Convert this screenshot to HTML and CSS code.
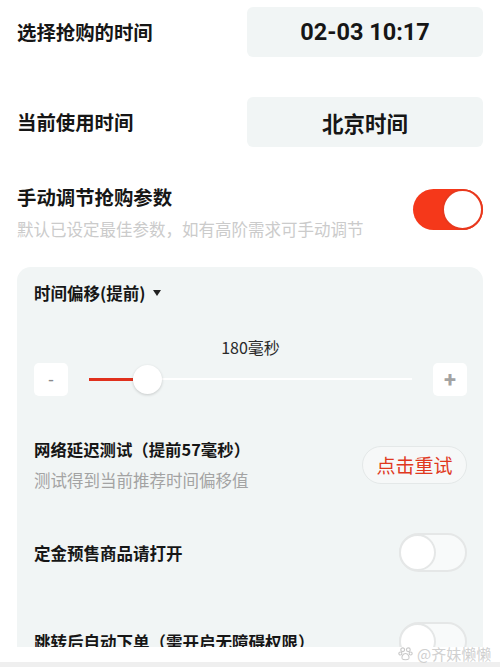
FILE: index.html
```html
<!DOCTYPE html>
<html lang="zh-CN">
<head>
    <meta charset="UTF-8">
    <meta name="viewport" content="width=device-width, initial-scale=1.0">
    <title>抢购设置</title>
    <link rel="stylesheet" href="styles.css">
</head>
<body>

    <div class="screen">
        <div class="content">

            <div class="row first">
                <div class="label">选择抢购的时间</div>
                <div class="pick time">02-03 10:17</div>
            </div>

            <div class="row second">
                <div class="label">当前使用时间</div>
                <div class="pick zone">北京时间</div>
            </div>

            <div class="manual">
                <div class="manual-text">
                    <div class="label">手动调节抢购参数</div>
                    <div class="hint">默认已设定最佳参数，如有高阶需求可手动调节</div>
                </div>
                <div class="switch on"><span class="knob"></span></div>
            </div>

            <div class="card">
                <div class="card-title">时间偏移(提前)<span class="arrow"></span></div>

                <div class="value">180毫秒</div>

                <div class="slider">
                    <div class="step">-</div>
                    <div class="track">
                        <div class="line"></div>
                        <div class="fill"></div>
                        <div class="thumb"></div>
                    </div>
                    <div class="step plus">+</div>
                </div>

                <div class="net">
                    <div>
                        <div class="net-title">网络延迟测试（提前57毫秒）</div>
                        <div class="net-hint">测试得到当前推荐时间偏移值</div>
                    </div>
                    <div class="retry">点击重试</div>
                </div>

                <div class="opt deposit">
                    <div class="opt-name">定金预售商品请打开</div>
                    <div class="switch off"><span class="knob"></span></div>
                </div>

                <div class="opt auto">
                    <div class="opt-name">跳转后自动下单（需开启无障碍权限）</div>
                    <div class="switch off"><span class="knob"></span></div>
                </div>
            </div>

        </div>
        <div class="footer"></div>

        <div class="watermark">
            <svg width="15" height="15" viewBox="0 0 16 16" fill="none" stroke="#c9c9c9" stroke-width="1.2">
                <circle cx="5" cy="4" r="2"/>
                <circle cx="11" cy="4" r="2"/>
                <circle cx="2.5" cy="8" r="1.6"/>
                <circle cx="13.5" cy="8" r="1.6"/>
                <path d="M8 8 C5 8 3.5 12 4.5 13.6 C5.5 15 10.5 15 11.5 13.6 C12.5 12 11 8 8 8 Z"/>
            </svg>
            <span>@齐妹懒懒</span>
        </div>
    </div>

</body>
</html>
```

FILE: styles.css
```css
* {
    box-sizing: border-box;
}
body {
    margin: 0;
    background: #fff;
    color: #161616;
    font-family: "Noto Sans CJK SC", "Noto Sans", sans-serif;
}
.screen {
    width: 500px;
    height: 667px;
    display: flex;
    flex-direction: column;
    position: relative; /* 워터마크 기준 */
}
.content {
    height: 647px;
    overflow: hidden;
    padding: 0 17px;
}
.footer {
    height: 20px;
    background: #fff;
    border-bottom: 5px solid #efefef;
}

/* 위쪽 두 줄 */
.row {
    display: flex;
    align-items: center;
    justify-content: space-between;
}
.row.first {
    margin-top: 7px;
}
.row.second {
    margin-top: 40px;
}
.label {
    font-size: 19.4px;
    font-weight: 700;
    line-height: 26px;
}
.pick {
    width: 236px;
    height: 50px;
    border-radius: 6px;
    background: #f1f5f5;
    display: flex;
    align-items: center;
    justify-content: center;
    font-weight: 700;
}
.time {
    font-family: Roboto, "Noto Sans", sans-serif;
    font-size: 23.5px;
}
.zone {
    font-size: 21.5px;
}

/* 수동 조절 */
.manual {
    margin-top: 37px;
    display: flex;
    justify-content: space-between;
    align-items: flex-start;
}
.hint {
    margin-top: 7px;
    font-size: 16.5px;
    line-height: 24px;
    color: #cbcbcb;
}
.switch {
    border-radius: 999px;
    display: flex;
    align-items: center;
}
.switch .knob {
    display: block;
    border-radius: 50%;
    background: #fff;
}
.switch.on {
    margin-top: 5px;
    width: 70px;
    height: 41px;
    background: #f5381a;
    justify-content: flex-end;
}
.switch.on .knob {
    width: 41px;
    height: 41px;
    border: 2px solid #e8391e;
}
.switch.off {
    width: 68px;
    height: 39px;
    border: 2px solid #e5e7e7;
    background: #f8fafa;
}
.switch.off .knob {
    width: 37px;
    height: 37px;
    margin-left: -2px;
    border: 2px solid #e5e7e7;
}

/* 회색 카드 */
.card {
    margin-top: 26px;
    padding: 14px 16px 40px 17px;
    border-radius: 14px 14px 0 0;
    background: #f1f5f5;
}
.card-title {
    font-size: 16.5px;
    font-weight: 700;
    line-height: 24px;
    display: flex;
    align-items: center;
}
.arrow {
    margin-left: 8px;
    border-left: 4.5px solid transparent;
    border-right: 4.5px solid transparent;
    border-top: 6px solid #222;
}
.value {
    margin-top: 31px;
    text-align: center;
    font-size: 16px;
    line-height: 22px;
    color: #2a2a2a;
}
.slider {
    margin-top: 5px;
    display: flex;
    align-items: center;
}
.step {
    width: 34px;
    height: 33px;
    border-radius: 5px;
    background: #fff;
    display: flex;
    align-items: center;
    justify-content: center;
    font-family: Roboto, sans-serif;
    font-size: 18px;
    color: #8a8a8a;
}
.step.plus {
    font-size: 22px;
    font-weight: 700;
    color: #a3a3a3;
}
.track {
    flex: 1;
    height: 33px;
    margin: 0 21px;
    position: relative;
}
.line {
    position: absolute;
    left: 0;
    right: 0;
    top: 15px;
    height: 2px;
    background: #fff;
}
.fill {
    position: absolute;
    left: 0;
    top: 15px;
    width: 44px;
    height: 3px;
    background: #e0301c;
}
.thumb {
    position: absolute;
    left: 44px;
    top: 2px;
    width: 29px;
    height: 29px;
    border-radius: 50%;
    background: #fff;
    box-shadow: 0 1px 3px rgba(0, 0, 0, 0.18);
}

.net {
    margin-top: 41px;
    display: flex;
    justify-content: space-between;
    align-items: center;
}
.net-title {
    font-size: 16.4px;
    font-weight: 700;
    line-height: 24px;
}
.net-hint {
    margin-top: 7px;
    font-size: 16.5px;
    line-height: 24px;
    color: #a3a3a3;
}
.retry {
    width: 105px;
    height: 38px;
    border-radius: 999px;
    border: 1px solid #e4e8e8;
    background: #f6f8f8;
    color: #e0381e;
    font-size: 19px;
    display: flex;
    align-items: center;
    justify-content: center;
}

.opt {
    display: flex;
    justify-content: space-between;
    align-items: center;
}
.opt.deposit {
    margin-top: 41px;
}
.opt.auto {
    margin-top: 50px;
}
.opt-name {
    font-size: 16.5px;
    font-weight: 700;
}

.watermark {
    position: absolute;
    left: 398px;
    bottom: 3px;
    display: flex;
    align-items: center;
    gap: 4px;
    font-size: 15px;
    color: #d0d0d0;
}
```
